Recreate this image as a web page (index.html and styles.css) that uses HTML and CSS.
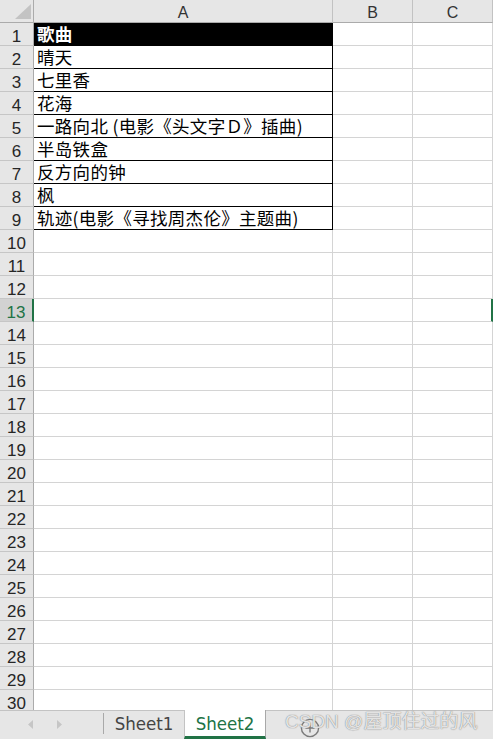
FILE: index.html
```html
<!DOCTYPE html>
<html lang="zh-CN">
<head>
<meta charset="utf-8">
<title>Sheet2</title>
<link rel="stylesheet" href="styles.css">
</head>
<body>
<div class="app">
  <div class="sheet">
    <div class="corner"><svg class="tri" width="16" height="15" viewBox="0 0 16 15"><polygon points="16,0 16,15 0,15" fill="#c3c3c3"/></svg></div>
    <div class="colh">A</div><div class="colh">B</div><div class="colh">C</div>

    <div class="rowh">1</div><div class="cell a title">歌曲</div><div class="cell"></div><div class="cell"></div>
    <div class="rowh">2</div><div class="cell a">晴天</div><div class="cell"></div><div class="cell"></div>
    <div class="rowh">3</div><div class="cell a">七里香</div><div class="cell"></div><div class="cell"></div>
    <div class="rowh">4</div><div class="cell a">花海</div><div class="cell"></div><div class="cell"></div>
    <div class="rowh">5</div><div class="cell a">一路向北 (电影《头文字Ｄ》插曲)</div><div class="cell"></div><div class="cell"></div>
    <div class="rowh">6</div><div class="cell a">半岛铁盒</div><div class="cell"></div><div class="cell"></div>
    <div class="rowh">7</div><div class="cell a">反方向的钟</div><div class="cell"></div><div class="cell"></div>
    <div class="rowh">8</div><div class="cell a">枫</div><div class="cell"></div><div class="cell"></div>
    <div class="rowh">9</div><div class="cell a">轨迹(电影《寻找周杰伦》主题曲)</div><div class="cell"></div><div class="cell"></div>
    <div class="rowh">10</div><div class="cell"></div><div class="cell"></div><div class="cell"></div>
    <div class="rowh">11</div><div class="cell"></div><div class="cell"></div><div class="cell"></div>
    <div class="rowh">12</div><div class="cell"></div><div class="cell"></div><div class="cell"></div>
    <div class="rowh active">13</div><div class="cell"></div><div class="cell"></div><div class="cell edge"></div>
    <div class="rowh">14</div><div class="cell"></div><div class="cell"></div><div class="cell"></div>
    <div class="rowh">15</div><div class="cell"></div><div class="cell"></div><div class="cell"></div>
    <div class="rowh">16</div><div class="cell"></div><div class="cell"></div><div class="cell"></div>
    <div class="rowh">17</div><div class="cell"></div><div class="cell"></div><div class="cell"></div>
    <div class="rowh">18</div><div class="cell"></div><div class="cell"></div><div class="cell"></div>
    <div class="rowh">19</div><div class="cell"></div><div class="cell"></div><div class="cell"></div>
    <div class="rowh">20</div><div class="cell"></div><div class="cell"></div><div class="cell"></div>
    <div class="rowh">21</div><div class="cell"></div><div class="cell"></div><div class="cell"></div>
    <div class="rowh">22</div><div class="cell"></div><div class="cell"></div><div class="cell"></div>
    <div class="rowh">23</div><div class="cell"></div><div class="cell"></div><div class="cell"></div>
    <div class="rowh">24</div><div class="cell"></div><div class="cell"></div><div class="cell"></div>
    <div class="rowh">25</div><div class="cell"></div><div class="cell"></div><div class="cell"></div>
    <div class="rowh">26</div><div class="cell"></div><div class="cell"></div><div class="cell"></div>
    <div class="rowh">27</div><div class="cell"></div><div class="cell"></div><div class="cell"></div>
    <div class="rowh">28</div><div class="cell"></div><div class="cell"></div><div class="cell"></div>
    <div class="rowh">29</div><div class="cell"></div><div class="cell"></div><div class="cell"></div>
    <div class="rowh">30</div><div class="cell"></div><div class="cell"></div><div class="cell"></div>
  </div>
  <div class="tabbar">
    <div class="nav">
      <svg class="arrow" width="5" height="9" viewBox="0 0 5 9"><polygon points="5,0 5,9 0,4.5" fill="#c6c6c6"/></svg>
      <svg class="arrow" width="5" height="9" viewBox="0 0 5 9"><polygon points="0,0 0,9 5,4.5" fill="#c6c6c6"/></svg>
    </div>
    <div class="sep"></div>
    <div class="tab">Sheet1</div>
    <div class="tab current">Sheet2</div>
    <div class="rest">
      <svg class="addsheet" width="20" height="20" viewBox="0 0 20 20"><circle cx="10" cy="10" r="8.6" fill="none" stroke="#7b7b7b" stroke-width="1.4"/><path d="M10 5.5V14.5M5.5 10H14.5" stroke="#7b7b7b" stroke-width="1.4"/></svg>
      <div class="watermark">CSDN @屋顶住过的风</div>
    </div>
  </div>
</div>
</body>
</html>
```

FILE: styles.css
```css
* {
  box-sizing: border-box;
}

html, body {
  margin: 0;
  padding: 0;
  background: #ffffff;
}

body {
  width: 493px;
  height: 739px;
  overflow: hidden;
  font-family: "Liberation Sans", Arial, sans-serif;
}

.app {
  display: flex;
  flex-direction: column;
  width: 493px;
  height: 739px;
}

.sheet {
  height: 710px;
  flex: none;
  overflow: hidden;
  display: grid;
  grid-template-columns: 34px 299px 80px 80px;
  grid-auto-rows: 23px;
}

.corner {
  background: #e6e6e6;
  border-right: 1px solid #ababab;
  border-bottom: 1px solid #ababab;
  display: flex;
  justify-content: flex-end;
  align-items: flex-end;
  padding: 0 2px 3px 0;
}

.tri {
  display: block;
}

.colh {
  background: #e6e6e6;
  border-right: 1px solid #c2c2c2;
  border-bottom: 1px solid #ababab;
  text-align: center;
  font-size: 16px;
  line-height: 26px;
  color: #333333;
}

.rowh {
  background: #e6e6e6;
  border-right: 1px solid #ababab;
  border-bottom: 1px solid #c6c6c6;
  text-align: center;
  font-size: 17px;
  line-height: 27px;
  color: #262626;
}

.rowh.active {
  background: #d2d2d2;
  color: #217346;
  border-right: 2px solid #217346;
}

.cell {
  border-right: 1px solid #d4d4d4;
  border-bottom: 1px solid #d4d4d4;
  font-family: "Noto Sans CJK SC", "Liberation Sans", sans-serif;
  font-size: 17.5px;
  letter-spacing: 0.3px;
  line-height: 22px;
  padding-left: 3px;
  white-space: nowrap;
  color: #000000;
}

.cell.a {
  border-right-color: #000000;
  border-bottom-color: #000000;
}

.cell.title {
  background: #000000;
  color: #ffffff;
  font-weight: bold;
}

.cell.edge {
  border-right: 2px solid #217346;
}

.tabbar {
  position: relative;
  flex: none;
  height: 29px;
  background: #e6e6e6;
  border-top: 1px solid #c3c3c3;
  display: flex;
  align-items: stretch;
}

.nav {
  width: 103px;
  display: flex;
  align-items: flex-start;
  gap: 24px;
  padding: 9px 0 0 28px;
}

.arrow {
  display: block;
}

.sep {
  width: 1px;
  background: #a9a9a9;
  margin: 2px 0 5px 0;
}

.tab {
  width: 80px;
  display: flex;
  justify-content: center;
  align-items: center;
  padding-bottom: 3px;
  font-family: "Liberation Sans Narrow", "DejaVu Sans Condensed", "Roboto", sans-serif;
  font-size: 18.5px;
  color: #444444;
}

.tab.current {
  width: 82px;
  margin-top: -1px;
  background: #ffffff;
  border-left: 1px solid #c3c3c3;
  border-right: 1px solid #a8a8a8;
  border-bottom: 3px solid #217346;
  padding-bottom: 0;
  color: #217346;
}

.rest {
  flex: 1;
  position: relative;
}

.addsheet {
  position: absolute;
  left: 34px;
  top: 7px;
}

.watermark {
  position: absolute;
  left: 19px;
  top: -2px;
  font-family: "Liberation Sans", "Noto Sans CJK SC", sans-serif;
  font-size: 19px;
  line-height: 26px;
  white-space: nowrap;
  color: rgba(255, 255, 255, 0.8);
  text-shadow: 0 0 1px rgba(90, 90, 90, 0.7), 0 0 1px rgba(120, 120, 120, 0.5);
}
```
